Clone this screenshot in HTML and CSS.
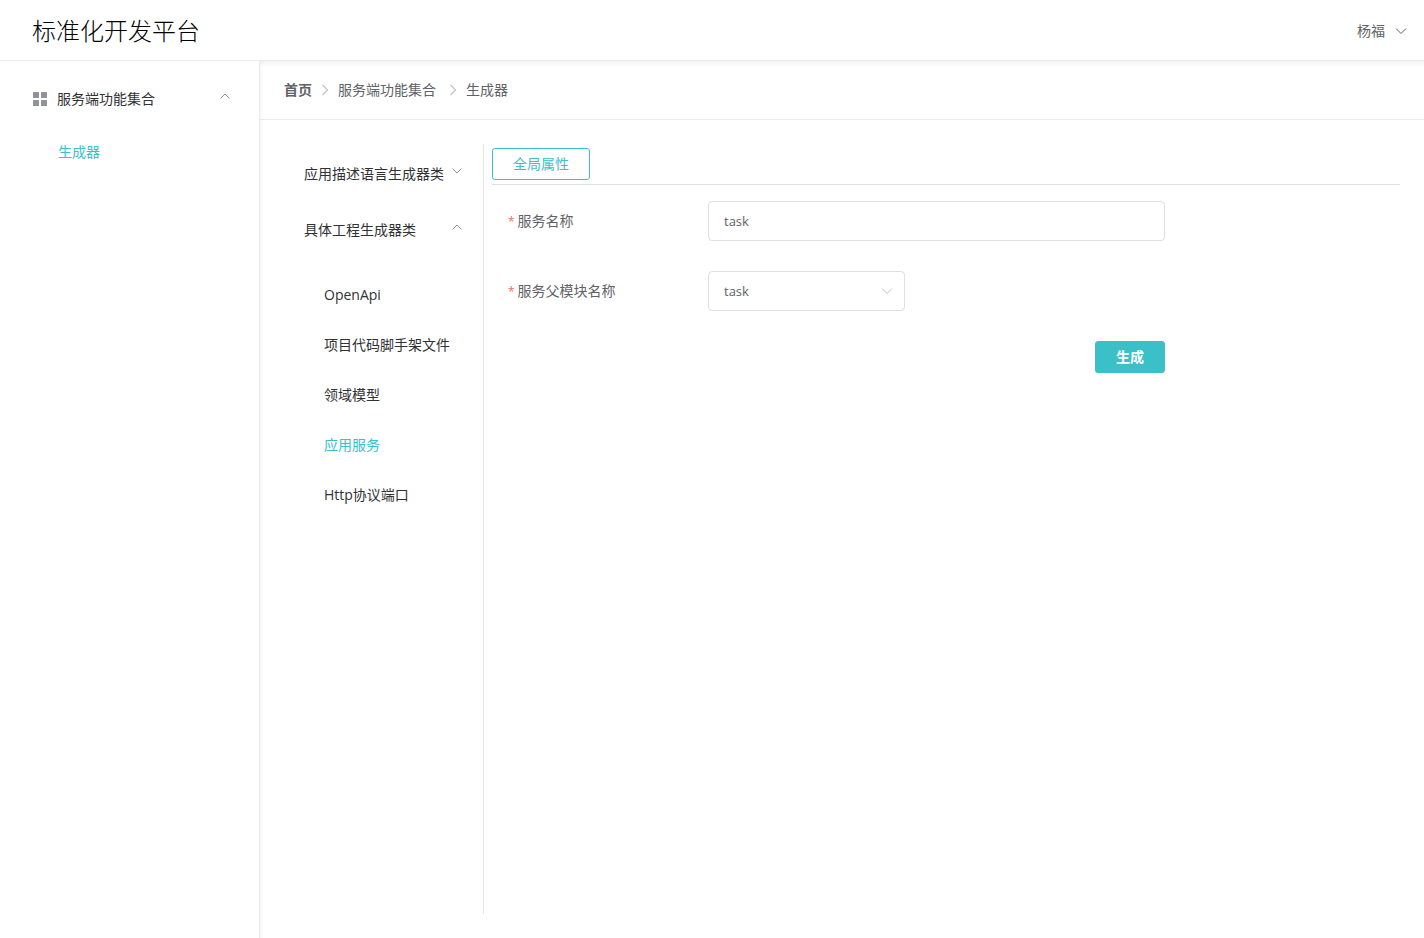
FILE: index.html
```html
<!DOCTYPE html>
<html lang="zh-CN">
<head>
<meta charset="utf-8">
<meta name="viewport" content="width=device-width, initial-scale=1">
<title>标准化开发平台</title>
<link rel="stylesheet" href="styles.css">
</head>
<body>
<svg class="symbols" aria-hidden="true">
  <symbol id="down" viewBox="0 0 12 12"><path d="M1 3.5 6 8.5 11 3.5" fill="none" stroke="currentColor"/></symbol>
  <symbol id="up" viewBox="0 0 12 12"><path d="M1.5 8.5 6 4 10.5 8.5" fill="none" stroke="currentColor"/></symbol>
  <symbol id="fold" viewBox="0 0 12 12"><path d="M1.5 3.5 6 8 10.5 3.5" fill="none" stroke="currentColor"/></symbol>
  <symbol id="right" viewBox="0 0 12 12"><path d="M3.5 1 8.5 6 3.5 11" fill="none" stroke="currentColor" stroke-width="1.3"/></symbol>
</svg>
<header class="header">
  <h1 class="title">标准化开发平台</h1>
  <button type="button" class="user">杨福<svg class="icon"><use href="#down"/></svg></button>
</header>
<div class="body">
  <nav class="sidebar" aria-label="主菜单">
    <button type="button" class="group main-group">
      <svg class="grid-icon" viewBox="0 0 14 14" fill="currentColor"><rect width="6" height="6" rx="0.5"/><rect x="8" width="6" height="6" rx="0.5"/><rect y="8" width="6" height="6" rx="0.5"/><rect x="8" y="8" width="6" height="6" rx="0.5"/></svg>
      <span class="group-label">服务端功能集合</span>
      <svg class="icon arrow"><use href="#up"/></svg>
    </button>
    <a class="item main-item active" href="#">生成器</a>
  </nav>
  <div class="page">
    <nav class="breadcrumb" aria-label="面包屑">
      <a class="crumb home" href="#">首页</a>
      <svg class="icon separator"><use href="#right"/></svg>
      <a class="crumb parent" href="#">服务端功能集合</a>
      <svg class="icon separator"><use href="#right"/></svg>
      <span class="crumb">生成器</span>
    </nav>
    <main class="content">
      <nav class="submenu" aria-label="生成器">
        <button type="button" class="group"><span class="group-label">应用描述语言生成器类</span><svg class="icon arrow"><use href="#fold"/></svg></button>
        <button type="button" class="group"><span class="group-label">具体工程生成器类</span><svg class="icon arrow"><use href="#up"/></svg></button>
        <div class="children">
          <a class="item" href="#">OpenApi</a>
          <a class="item" href="#">项目代码脚手架文件</a>
          <a class="item" href="#">领域模型</a>
          <a class="item active" href="#">应用服务</a>
          <a class="item" href="#">Http协议端口</a>
        </div>
      </nav>
      <section class="panel">
        <div class="tabs"><button type="button" class="button tab">全局属性</button></div>
        <div class="form-wrap">
          <form class="form">
            <div class="row">
              <label class="label" for="name">服务名称</label>
              <input class="control" id="name" type="text" value="task">
            </div>
            <div class="row">
              <label class="label" for="parent">服务父模块名称</label>
              <div class="select-box">
                <select class="control" id="parent"><option>task</option></select>
                <svg class="icon select-arrow"><use href="#down"/></svg>
              </div>
            </div>
            <button type="button" class="button submit">生成</button>
          </form>
        </div>
      </section>
    </main>
  </div>
</div>
</body>
</html>
```
FILE: styles.css
```css
*, *::before, *::after { box-sizing: border-box; }

body {
  margin: 0;
  min-height: 100vh;
  display: flex;
  flex-direction: column;
  background: #fff;
  color: #606266;
  font: 14px/20px "Open Sans", "Noto Sans CJK SC", sans-serif;
}

button, input, select { font: inherit; color: inherit; }
button { border: 0; background: none; padding: 0; cursor: pointer; }
a { color: inherit; text-decoration: none; }

.symbols { position: absolute; width: 0; height: 0; }
.icon { width: 12px; height: 12px; flex: none; }

.header {
  display: flex;
  align-items: center;
  justify-content: space-between;
  height: 61px;
  padding: 2px 17px 0 32px;
  background: #fff;
  border-bottom: 1px solid #ebebeb;
}
.title {
  margin: 0;
  color: #000;
  font-size: 24px;
  line-height: 32px;
  font-weight: 300;
}
.user { display: flex; align-items: center; gap: 10px; }

.body { flex: 1; display: flex; }

.sidebar {
  flex: none;
  width: 260px;
  padding-top: 10px;
  border-right: 1px solid #ebebeb;
}
.group {
  display: flex;
  align-items: center;
  width: 100%;
  height: 56px;
  padding: 0 20px;
  color: #303133;
  text-align: left;
  white-space: nowrap;
}
.group-label { flex: 1; }
.arrow { color: #909399; margin-bottom: 6px; }
.main-group { padding: 0 28px 0 33px; }
.grid-icon { width: 14px; height: 14px; margin-right: 10px; color: #909399; }
.item {
  display: flex;
  align-items: center;
  height: 50px;
  color: #303133;
}
.main-item { padding-left: 58px; }
.item.active { color: #3bc0c8; }

.page {
  flex: 1;
  min-width: 0;
  display: flex;
  flex-direction: column;
  background:
    linear-gradient(to bottom, rgba(0, 0, 0, 0.05), transparent) top / 100% 5px no-repeat,
    linear-gradient(to right, rgba(0, 0, 0, 0.03), transparent) left / 4px 100% no-repeat;
}
.breadcrumb {
  display: flex;
  align-items: center;
  height: 59px;
  padding: 0 24px;
  border-bottom: 1px solid #ebebeb;
}
.home { font-weight: 700; }
.separator { margin: 0 7px; color: #c0c4cc; }
.parent { margin-right: 4px; }

.content { flex: 1; display: flex; padding: 24px; }
.submenu {
  flex: none;
  width: 200px;
  padding-top: 2px;
  border-right: 1px solid #e6e6e6;
}
.children { padding: 12px 0 0 40px; }

.panel { flex: 1; min-width: 0; padding-left: 8px; }
.button {
  display: inline-flex;
  align-items: center;
  justify-content: center;
  height: 32px;
  padding: 0 20px;
  border: 1px solid #3bc0c8;
  border-radius: 3px;
}
.tabs {
  display: flex;
  padding: 4px 0;
  border-bottom: 1px solid #dcdfe6;
}
.tab { color: #3bc0c8; }

.form-wrap { padding: 16px; }
.form {
  width: 75%;
  display: flex;
  flex-direction: column;
  gap: 30px;
}
.row { display: flex; align-items: center; }
.label { flex: none; width: 200px; }
.label::before { content: "*"; color: #f56c6c; margin-right: 3px; font-size: 12px; }
.control {
  flex: 1;
  min-width: 0;
  width: 100%;
  height: 40px;
  padding: 0 15px;
  background: #fff;
  border: 1px solid #dcdfe6;
  border-radius: 4px;
  font-size: 13px;
  appearance: none;
}
.select-box { position: relative; width: 30%; }
.select-arrow {
  position: absolute;
  right: 12px;
  top: 14px;
  color: #c0c4cc;
  pointer-events: none;
}
.submit {
  align-self: flex-end;
  background: #3bc0c8;
  color: #fff;
  font-weight: 700;
}
```
